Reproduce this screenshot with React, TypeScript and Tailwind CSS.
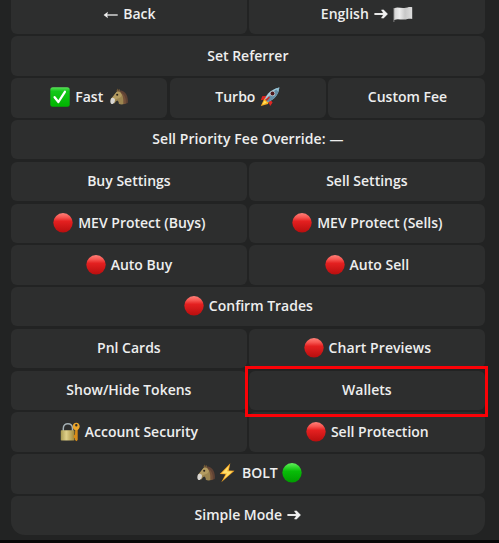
import type { ReactNode } from "react";

function Dot({ green = false }: { green?: boolean }) {
  const id = green ? "dot-green" : "dot-red";
  return (
    <svg className="h-5 w-5 shrink-0" viewBox="0 0 20 20">
      <defs>
        <linearGradient id={id} x1="0" y1="0" x2="0" y2="1">
          <stop offset="0" stopColor={green ? "#62f05c" : "#ff8078"} />
          <stop offset=".22" stopColor={green ? "#2fd62c" : "#f75550"} />
          <stop offset=".42" stopColor={green ? "#08bd08" : "#e42020"} />
          <stop offset="1" stopColor={green ? "#009c00" : "#b80e0e"} />
        </linearGradient>
      </defs>
      <circle cx="10" cy="9.8" r="9.7" fill={`url(#${id})`} />
    </svg>
  );
}

function Check() {
  return (
    <svg className="h-5 w-5 shrink-0" viewBox="0 0 20 20">
      <defs>
        <linearGradient id="check" x1="0" y1="0" x2="0" y2="1">
          <stop offset="0" stopColor="#5be15b" />
          <stop offset=".2" stopColor="#14c81a" />
          <stop offset="1" stopColor="#00b400" />
        </linearGradient>
      </defs>
      <rect x=".3" y=".3" width="19.4" height="19.4" rx="2.5" fill="url(#check)" />
      <path d="M4.600 10.200 8.400 15 14.900 4.800" fill="none" stroke="#fff" strokeWidth="2.300" strokeLinecap="round" strokeLinejoin="round" />
    </svg>
  );
}

function Horse() {
  return (
    <svg className="h-5 w-[18px] shrink-0" viewBox="0 0 18 20">
      <path d="M7.500 4c4.500-1.600 8.300 1 9.700 5.500.7 2.500.9 4.300.5 6.500l-3.200 1.200L8 9z" fill="#5f4234" />
      <path d="M6.300 4.300 7.600 1.600 8.900 4z" fill="#6f5834" />
      <path d="M6.500 5 9.400 2.200l.9 3c3 1.600 4.500 5.500 4.200 11.600-1.800 1-4.300.9-5.700 0 .1-1.700-.4-2.800-1.700-3.300-1 .3-1.500 1.500-2.700 3l-3.300-1.300L.8 12z" fill="#9c8550" />
      <path d="M6.500 5c1.700-.7 3.800-.1 4.800 1.400 1 1.700.3 3.600-1.600 4.400-2.400 1-4.500 1.300-5.500 2.500L1.700 11.600z" fill="#b39b60" />
      <path d="M10.300 5.200c2.400 2.200 3.400 6 3 11.700l2.600-.4c.3-5-1-9.500-5.600-11.300z" fill="#75523a" />
      <path d="M.8 12c.7-1.400 2.200-1.500 3.300-.7 1.100.9 1.200 2.500.3 3.900-.8 1.500-1.900 2.200-3 1.700C.1 16.300.1 13.700.8 12z" fill="#d8d6d2" />
      <circle cx="7.200" cy="7.800" r="1.050" fill="#2b231b" />
      <path d="M8 4.600 9 2.700l.4 2.100" fill="none" stroke="#5f432f" strokeWidth=".8" />
    </svg>
  );
}

function Rocket() {
  return (
    <svg className="h-5 w-5 shrink-0" viewBox="0 0 20 20">
      <path d="M7 8.800 2.200 9.300.8 13.300l4.700-1zM11 13.500l1.600 2-2.400 3.500-2-4.500z" fill="#df2724" />
      <path d="M4.300 11.500.8 18.900l7.200-2 1-3.200z" fill="#f7ae20" />
      <path d="M4.600 13.500 2.500 17.300l4.200-1.500z" fill="#ffe55d" />
      <path d="M5 11.800C7.100 6.500 11.500 2.300 19.300.6c-.6 7-4.800 12.100-11.800 14.400z" fill="#a5ccdd" />
      <path d="M6.500 13.200C9 8.800 12.500 4.500 19.300.6c-.6 7-4.800 12.100-11.800 14.400z" fill="#638da5" />
      <path d="M15.300 1.800 18.200 4.500 19.300.6z" fill="#8fbdcf" />
      <circle cx="12.500" cy="6.600" r="2.700" fill="#c0d0d6" />
      <circle cx="12.500" cy="6.600" r="2" fill="#4e171c" />
      <path d="M5.200 12.800 9 9.300l.9 1.500-3.200 3.100z" fill="#c72e2c" />
    </svg>
  );
}

function Flag() {
  return (
    <svg className="h-5 w-5 shrink-0" viewBox="0 0 20 20">
      <defs>
        <linearGradient id="flag">
          <stop offset="0" stopColor="#d5d5d5" />
          <stop offset=".3" stopColor="#ececec" />
          <stop offset=".6" stopColor="#c8c8c8" />
          <stop offset="1" stopColor="#dedede" />
        </linearGradient>
      </defs>
      <path d="M.9 4v14" stroke="#898989" strokeWidth=".9" />
      <path d="M1.200 4.200c3.500-1.700 6.500.2 10-.2 3-.4 5-1.400 8-.8v11.700c-3-.6-5 .4-8 .7-3.500.2-6.500-1.200-10 .3z" fill="url(#flag)" />
    </svg>
  );
}

function Lock() {
  return (
    <svg className="h-5 w-5 shrink-0" viewBox="0 0 20 20">
      <defs>
        <linearGradient id="lock">
          <stop offset="0" stopColor="#a99a51" />
          <stop offset=".4" stopColor="#dfd08a" />
          <stop offset="1" stopColor="#9f8738" />
        </linearGradient>
      </defs>
      <path d="M3.300 9V6.500c0-6.500 9.200-6.500 9.200 0V9" fill="none" stroke="#a4b0b4" strokeWidth="1.500" />
      <rect x=".8" y="8.200" width="13.700" height="10.300" rx=".7" fill="url(#lock)" />
      <path d="M15.200 7h2.500v11l-1.300 1.300-1.400-1.300v-1.500l-1.300-1v-2l1.300-1z" fill="#d88c18" />
      <path fillRule="evenodd" d="M16.300.7c2 0 3.400 1.500 3.400 3.600s-1.400 4-3.500 4-3.500-1.700-3.500-3.900S14.200.7 16.300.7zm0 1.300a1.200 1.200 0 1 0 0 2.400 1.200 1.200 0 0 0 0-2.400z" fill="#eba52b" />
    </svg>
  );
}

function Bolt() {
  return (
    <svg className="h-5 w-4 shrink-0" viewBox="0 0 16 20">
      <path d="M11.300.3.8 11.100l5.700.2L2.300 19.300 15.500 7.800l-5.700-.3z" fill="#f5a623" />
      <path d="M10.200 2.500 2.700 10.300l5.200.2L4.700 16.300 13.500 8.600l-5.400-.3z" fill="#ffe06c" />
    </svg>
  );
}

function Arrow({ left = false }: { left?: boolean }) {
  return left ? (
    <svg className="h-3.5 w-[15px] shrink-0" viewBox="0 0 15 14">
      <path d="M2.500 8h12.200" fill="none" stroke="#eee" strokeWidth="1.300" />
      <path d="M.6 8 4.900 4.700 4.200 8l.7 3.300z" fill="#eee" />
    </svg>
  ) : (
    <svg className="h-3.5 w-[14px] shrink-0" viewBox="0 0 14 14">
      <path d="M.4 7h11" fill="none" stroke="#f2f2f2" strokeWidth="1.900" />
      <path d="M7.300 2.900 9.500 2.800 13.700 7 9.500 11.200 7.300 11.100 9.900 7z" fill="#f2f2f2" stroke="#f2f2f2" strokeWidth=".3" />
    </svg>
  );
}

function Key({ children, last = false }: { children: ReactNode; last?: boolean }) {
  return (
    <button
      className={`flex min-w-0 flex-1 items-center justify-center gap-[5px] whitespace-nowrap bg-[#2d2e2e] pb-px ${
        last ? "rounded-t-[6px] rounded-b-[14px]" : "rounded-[6px]"
      }`}
    >
      {children}
    </button>
  );
}

function Row({ children }: { children: ReactNode }) {
  return <div className="flex h-[39.4px] shrink-0 gap-[2.2px]">{children}</div>;
}

export default function App() {
  return (
    <main className="flex h-[543px] w-[499px] flex-col overflow-hidden bg-[#222323] font-['Open_Sans',sans-serif] text-[14px] leading-5 font-semibold text-[#eeeeee]">
      <div className="-mt-[5.4px] mr-[14.3px] ml-[11px] flex flex-col gap-[2.4px]">
        <Row>
          <Key><span className="flex items-center gap-[5px] pl-px"><Arrow left /><span>Back</span></span></Key>
          <Key><span>English</span><Arrow /><Flag /></Key>
        </Row>
        <Row><Key>Set Referrer</Key></Row>
        <Row>
          <Key><Check /><span className="mr-0.5">Fast</span><Horse /></Key>
          <Key><span>Turbo</span><Rocket /></Key>
          <Key><span className="pl-0.5">Custom Fee</span></Key>
        </Row>
        <Row><Key><span className="tracking-[0.08px]">Sell Priority Fee Override: —</span></Key></Row>
        <Row><Key>Buy Settings</Key><Key>Sell Settings</Key></Row>
        <Row>
          <Key><span className="flex gap-[5px] pl-px"><Dot /><span>MEV Protect (Buys)</span></span></Key>
          <Key><span className="flex gap-[5px] pl-px"><Dot /><span>MEV Protect (Sells)</span></span></Key>
        </Row>
        <Row>
          <Key><span className="flex gap-[5px] pt-px"><Dot /><span>Auto Buy</span></span></Key>
          <Key><span className="flex gap-[5px] pt-px"><Dot /><span>Auto Sell</span></span></Key>
        </Row>
        <Row><Key><span className="flex gap-[5px] pl-px"><Dot /><span>Confirm Trades</span></span></Key></Row>
        <Row>
          <Key>Pnl Cards</Key>
          <Key><span className="flex gap-[5px] pl-px"><Dot /><span className="tracking-[0.07px]">Chart Previews</span></span></Key>
        </Row>
        <Row>
          <Key>Show/Hide Tokens</Key>
          <div className="relative flex flex-1">
            <Key>Wallets</Key>
            <div className="pointer-events-none absolute -top-[5px] -right-[3px] -bottom-[7px] -left-[4px] border-[3px] border-[#fb0207]" />
          </div>
        </Row>
        <Row>
          <Key><Lock /><span>Account Security</span></Key>
          <Key><span className="flex gap-[5px] pl-px"><Dot /><span>Sell Protection</span></span></Key>
        </Row>
        <Row>
          <Key>
            <span className="flex gap-1 pl-[3px]">
              <Horse /><Bolt /><span className="pl-[3px]">BOLT</span><Dot green />
            </span>
          </Key>
        </Row>
        <Row><Key last><span>Simple Mode</span><Arrow /></Key></Row>
      </div>
      <div className="mt-auto h-[3px] shrink-0 bg-[#080808]" />
    </main>
  );
}
